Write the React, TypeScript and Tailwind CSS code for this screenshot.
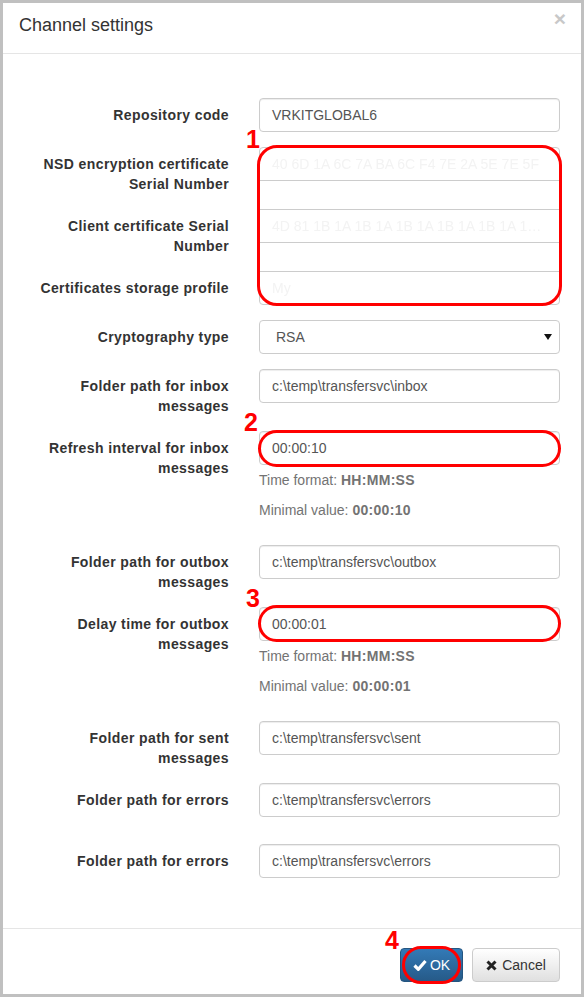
import React from 'react'

const font = "font-['Liberation_Sans',Arial,sans-serif]"

function Label({ children, className = '' }: { children: React.ReactNode; className?: string }) {
  return (
    <div className={`w-[226px] shrink-0 pl-[30px] pt-[7px] text-right font-bold leading-[20px] tracking-[0.4px] text-[#333] ${className}`}>
      {children}
    </div>
  )
}

function Input({ value }: { value: string }) {
  return (
    <div className="h-[34px] w-[301px] rounded-[4px] border border-[#ccc] bg-white px-[12px] leading-[32px] text-[#555] shadow-[inset_0_1px_1px_rgba(0,0,0,0.075)]">
      {value}
    </div>
  )
}

function Marker({ n, className }: { n: string; className: string }) {
  return (
    <span className={`pointer-events-none absolute text-[25px] font-bold leading-none text-[#ff0000] ${className}`}>{n}</span>
  )
}

function Help({ label, value, className = '' }: { label: string; value: string; className?: string }) {
  return (
    <div className={`leading-[20px] text-[#737373] ${className}`}>
      {label} <b className="tracking-[0.3px]">{value}</b>
    </div>
  )
}

export default function App() {
  return (
    <div className={`${font} flex h-[997px] w-[584px] flex-col border-[3px] border-[#c0c0c0] bg-white text-[14px] text-[#333]`}>
      {/* Header */}
      <div className="relative h-[51px] shrink-0 border-b border-[#e5e5e5] px-[16px] pt-[12px]">
        <div className="text-[18px] leading-[20px] text-[#333]">Channel settings</div>
        <span className="absolute right-[15px] top-[6px] text-[21px] font-bold leading-[20px] text-[#c8c8c8]">×</span>
      </div>

      {/* Body */}
      <div className="flex-1 pt-[44px]">
        <div className="mb-[15px] flex gap-[30px]">
          <Label>Repository code</Label>
          <Input value="VRKITGLOBAL6" />
        </div>

        {/* Certificates block */}
        <div className="mb-[15px] flex gap-[30px]">
          <div className="flex flex-col">
            <Label className="mb-[15px] h-[47px]">NSD encryption certificate Serial Number</Label>
            <Label className="mb-[15px] h-[47px]">Client certificate Serial Number</Label>
            <Label>Certificates storage profile</Label>
          </div>
          <div className="relative h-[158px] w-[301px]">
            <div className="flex h-full flex-col rounded-[4px] border border-[#ccc] text-[#f3f3f3]">
              <div className="h-[32px] truncate px-[12px] leading-[32px] blur-[0.6px]">40 6D 1A 6C 7A BA 6C F4 7E 2A 5E 7E 5F</div>
              <div className="h-[29px] border-t border-[#ccc]" />
              <div className="h-[33px] truncate border-t border-[#ccc] px-[12px] leading-[32px] blur-[0.6px]">4D 81 1B 1A 1B 1A 1B 1A 1B 1A 1B 1A 1B 1A</div>
              <div className="h-[29px] border-t border-[#ccc]" />
              <div className="h-[33px] border-t border-[#ccc] px-[12px] leading-[32px] blur-[0.6px]">My</div>
            </div>
            <div className="pointer-events-none absolute -inset-x-[2px] -bottom-[1px] -top-[2px] rounded-[20px] border-[3px] border-[#ff0000]" />
            <Marker n="1" className="-left-[13px] -top-[20px]" />
          </div>
        </div>

        <div className="mb-[15px] flex gap-[30px]">
          <Label>Cryptography type</Label>
          <div className="flex h-[34px] w-[301px] items-center justify-between rounded-[4px] border border-[#ccc] bg-white pl-[16px] pr-[7px] text-[#555]">
            <span>RSA</span>
            <svg width="8" height="6" viewBox="0 0 8 6"><path d="M0 0h8L4 6z" fill="#111" /></svg>
          </div>
        </div>

        <div className="mb-[15px] flex gap-[30px]">
          <Label>Folder path for inbox messages</Label>
          <Input value="c:\temp\transfersvc\inbox" />
        </div>

        <div className="mb-[15px] flex gap-[30px]">
          <Label>Refresh interval for inbox messages</Label>
          <div>
            <div className="relative">
              <Input value="00:00:10" />
              <div className="pointer-events-none absolute -left-[1px] -right-[1px] -top-[1px] -bottom-[2px] rounded-full border-[3px] border-[#ff0000]" />
              <Marker n="2" className="-left-[15px] -top-[21px]" />
            </div>
            <Help className="mt-[5px]" label="Time format:" value="HH:MM:SS" />
            <Help className="mb-[10px] mt-[10px]" label="Minimal value:" value="00:00:10" />
          </div>
        </div>

        <div className="mb-[15px] flex gap-[30px]">
          <Label>Folder path for outbox messages</Label>
          <Input value="c:\temp\transfersvc\outbox" />
        </div>

        <div className="mb-[15px] flex gap-[30px]">
          <Label>Delay time for outbox messages</Label>
          <div>
            <div className="relative">
              <Input value="00:00:01" />
              <div className="pointer-events-none absolute -left-[1px] -right-[1px] -top-[2px] -bottom-[1px] rounded-full border-[3px] border-[#ff0000]" />
              <Marker n="3" className="-left-[13px] -top-[21px]" />
            </div>
            <Help className="mt-[5px]" label="Time format:" value="HH:MM:SS" />
            <Help className="mb-[10px] mt-[10px]" label="Minimal value:" value="00:00:01" />
          </div>
        </div>

        <div className="mb-[15px] flex gap-[30px]">
          <Label>Folder path for sent messages</Label>
          <Input value="c:\temp\transfersvc\sent" />
        </div>

        <div className="mb-[27px] flex gap-[30px]">
          <Label>Folder path for errors</Label>
          <Input value="c:\temp\transfersvc\errors" />
        </div>

        <div className="flex gap-[30px]">
          <Label className="w-[225px]">Folder path for errors</Label>
          <Input value="c:\temp\transfersvc\errors" />
        </div>
      </div>

      {/* Footer */}
      <div className="flex h-[66px] shrink-0 items-start justify-end gap-[9px] border-t border-[#e5e5e5] pr-[21px] pt-[19px]">
        <div className="relative">
          <button className="flex h-[34px] w-[63px] items-center justify-center gap-[3px] rounded-[4px] border border-[#245580] bg-gradient-to-b from-[#337ab7] to-[#265a88] text-white">
            <svg width="14" height="12" viewBox="0 0 14 12"><path d="M1.5 6.5l3.8 3.8L12.5 2" stroke="#fff" strokeWidth="3.2" fill="none" /></svg>
            <span>OK</span>
          </button>
          <div className="pointer-events-none absolute -bottom-[2px] -top-[2px] left-[2px] right-[2px] rounded-full border-[3px] border-[#ff0000]" />
          <Marker n="4" className="-left-[15px] -top-[20px]" />
        </div>
        <button className="flex h-[34px] w-[88px] items-center justify-center gap-[5px] rounded-[4px] border border-[#ccc] bg-gradient-to-b from-white to-[#e0e0e0] text-[#333]">
          <svg width="11" height="11" viewBox="0 0 11 11"><path d="M1.5 1.5l8 8M9.5 1.5l-8 8" stroke="#222" strokeWidth="3" /></svg>
          <span>Cancel</span>
        </button>
      </div>
    </div>
  )
}
